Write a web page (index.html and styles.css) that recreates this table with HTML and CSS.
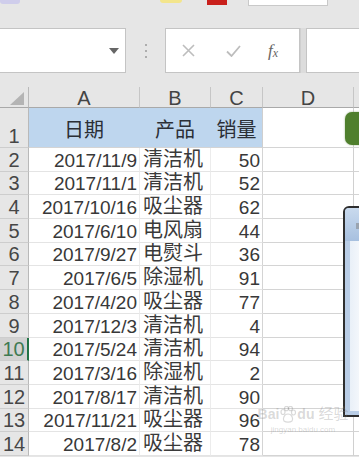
FILE: index.html
```html
<!DOCTYPE html>
<html lang="zh-CN">
<head>
<meta charset="utf-8">
<title>Sheet</title>
<link rel="stylesheet" href="styles.css">
</head>
<body>
<div class="app">
  <div class="ribbon">
    <span class="rb-purple"></span>
    <span class="rb-yellow"></span>
    <span class="rb-red"></span>
    <span class="rb-box"></span>
  </div>

  <div class="fbar">
    <div class="namebox">
      <svg class="dd" width="10" height="6" viewBox="0 0 10 6"><path d="M0 0 L10 0 L5 6 Z" fill="#666"/></svg>
    </div>
    <div class="dots"><i></i><i></i><i></i></div>
    <div class="fbtns">
      <svg class="ico-x" width="13" height="13" viewBox="0 0 13 13"><path d="M1 1 L12 12 M12 1 L1 12" stroke="#bdbdbd" stroke-width="1.6" fill="none"/></svg>
      <svg class="ico-ok" width="15" height="12" viewBox="0 0 15 12"><path d="M1 6.5 L5.5 11 L14 1" stroke="#bdbdbd" stroke-width="1.8" fill="none"/></svg>
      <span class="fx">f<span class="fx-x">x</span></span>
    </div>
    <div class="split"></div>
    <div class="finput"></div>
  </div>

  <div class="sheet">
    <div class="c corner"><svg width="14" height="13" viewBox="0 0 14 13"><path d="M14 0 L14 13 L0 13 Z" fill="#b4b4b4"/></svg></div>
    <div class="c ch">A</div>
    <div class="c ch">B</div>
    <div class="c ch">C</div>
    <div class="c ch">D</div>
    <div class="c ch e"></div>

    <div class="c rh">1</div>
    <div class="c hd">日期</div>
    <div class="c hd">产品</div>
    <div class="c hd last">销量</div>
    <div class="c d"></div>
    <div class="c e"></div>

    <div class="c rh">2</div><div class="c a">2017/11/9</div><div class="c b">清洁机</div><div class="c n">50</div><div class="c d"></div><div class="c e"></div>
    <div class="c rh">3</div><div class="c a">2017/11/1</div><div class="c b">清洁机</div><div class="c n">52</div><div class="c d"></div><div class="c e"></div>
    <div class="c rh">4</div><div class="c a">2017/10/16</div><div class="c b">吸尘器</div><div class="c n">62</div><div class="c d"></div><div class="c e"></div>
    <div class="c rh">5</div><div class="c a">2017/6/10</div><div class="c b">电风扇</div><div class="c n">44</div><div class="c d"></div><div class="c e"></div>
    <div class="c rh">6</div><div class="c a">2017/9/27</div><div class="c b">电熨斗</div><div class="c n">36</div><div class="c d"></div><div class="c e"></div>
    <div class="c rh">7</div><div class="c a">2017/6/5</div><div class="c b">除湿机</div><div class="c n">91</div><div class="c d"></div><div class="c e"></div>
    <div class="c rh">8</div><div class="c a">2017/4/20</div><div class="c b">吸尘器</div><div class="c n">77</div><div class="c d"></div><div class="c e"></div>
    <div class="c rh">9</div><div class="c a">2017/12/3</div><div class="c b">清洁机</div><div class="c n">4</div><div class="c d"></div><div class="c e"></div>
    <div class="c rh sel">10</div><div class="c a">2017/5/24</div><div class="c b">清洁机</div><div class="c n">94</div><div class="c d"></div><div class="c e"></div>
    <div class="c rh">11</div><div class="c a">2017/3/16</div><div class="c b">除湿机</div><div class="c n">2</div><div class="c d"></div><div class="c e"></div>
    <div class="c rh">12</div><div class="c a">2017/8/17</div><div class="c b">清洁机</div><div class="c n">90</div><div class="c d"></div><div class="c e"></div>
    <div class="c rh">13</div><div class="c a">2017/11/21</div><div class="c b">吸尘器</div><div class="c n">96</div><div class="c d"></div><div class="c e"></div>
    <div class="c rh">14</div><div class="c a">2017/8/2</div><div class="c b">吸尘器</div><div class="c n">78</div><div class="c d"></div><div class="c e"></div>
  </div>

  <div class="green-btn"></div>

  <div class="dialog">
    <div class="dlg-title"><span class="dlg-ico"></span></div>
    <div class="dlg-body"></div>
  </div>

  <div class="watermark">
    <div class="wm-main">
      <span>Bai</span>
      <svg class="wm-paw" width="16" height="17" viewBox="0 0 16 17"><g fill="none" stroke="currentColor" stroke-width="1.2"><ellipse cx="3" cy="6" rx="2" ry="2.5"/><ellipse cx="6.5" cy="2.5" rx="2" ry="2.2"/><ellipse cx="10.5" cy="2.5" rx="2" ry="2.2"/><ellipse cx="13.5" cy="6.5" rx="2" ry="2.5"/><path d="M8 8 C4 8 2.5 13 4 15 C6 16.5 10 16.5 12 15 C13.5 13 12 8 8 8 Z"/></g></svg>
      <span>du</span>
      <span class="wm-cn">经验</span>
    </div>
    <span class="wm-sub">jingyan.baidu.com</span>
  </div>
</div>
</body>
</html>
```

FILE: styles.css
```css
html, body {
  margin: 0;
  padding: 0;
}
body {
  width: 359px;
  height: 457px;
  overflow: hidden;
  background: #e6e6e6;
  font-family: "Liberation Sans", "Noto Sans CJK SC", sans-serif;
  color: #333;
}
.app {
  position: relative;
  width: 359px;
  height: 457px;
  overflow: hidden;
  background: #e6e6e6;
}

/* ribbon remnants at top */
.ribbon {
  height: 8px;
  display: flex;
  align-items: flex-start;
}
.ribbon span { display: block; }
.rb-purple {
  width: 20px; height: 4px;
  background: #cfcdeb;
  border-radius: 0 0 3px 3px;
}
.rb-yellow {
  width: 22px; height: 3px;
  margin-left: 140px;
  background: #f3e58c;
  border-radius: 0 0 6px 6px;
}
.rb-red {
  width: 20px; height: 5px;
  margin-left: 25px;
  background: #c9201c;
}
.rb-box {
  width: 78px; height: 5px;
  margin-left: 21px;
  background: #fff;
  border: 1px solid #c9c9c9;
  border-top: none;
}

/* formula bar */
.fbar {
  margin-top: 20px;
  height: 45px;
  display: flex;
}
.namebox {
  width: 126px;
  box-sizing: border-box;
  background: #fff;
  border: 1px solid #c4c4c4;
  border-left: none;
  display: flex;
  align-items: center;
  justify-content: flex-end;
  padding-right: 6px;
}
.dd { margin-top: 1px; }
.dots {
  width: 39px;
  display: flex;
  flex-direction: column;
  align-items: center;
  justify-content: center;
  gap: 4px;
}
.dots i {
  display: block;
  width: 2px; height: 2px;
  background: #9a9a9a;
  border-radius: 1px;
}
.fbtns {
  width: 135px;
  box-sizing: border-box;
  background: #fff;
  border: 1px solid #c4c4c4;
  display: flex;
  align-items: center;
  padding-left: 16px;
}
.ico-ok { margin-left: 31px; }
.fx {
  margin-left: 27px;
  font-family: "Liberation Serif", serif;
  font-style: italic;
  font-size: 17px;
  color: #666;
  line-height: 1;
}
.fx-x {
  font-size: 12px;
  position: relative;
  top: 1px;
}
.split {
  width: 6px;
  background: #dcdcdc;
  border-left: 1px solid #cfcfcf;
  box-sizing: border-box;
}
.finput {
  flex: 1;
  background: #fff;
  border: 1px solid #c4c4c4;
  border-right: none;
}

/* sheet grid */
.sheet {
  margin-top: 14px;
  display: grid;
  grid-template-columns: 29px 111px 71px 52px 91px 5px;
  grid-template-rows: 21px 40px repeat(13, 23.7px);
  background: #fff;
}
.c {
  box-sizing: border-box;
  overflow: hidden;
  white-space: nowrap;
  display: flex;
  align-items: flex-end;
  line-height: 21px;
  font-size: 19px;
  border-right: 1px solid #ececec;
  border-bottom: 1px solid #e4e4e4;
}
.corner {
  background: #e6e6e6;
  border-right: 1px solid #b9b9b9;
  border-bottom: 1px solid #a9a9a9;
  justify-content: flex-end;
  align-items: flex-end;
  padding: 0 4px 2px 0;
}
.corner svg { display: block; }
.ch {
  background: #e6e6e6;
  border-right: 1px solid #c6c6c6;
  border-bottom: 1px solid #a9a9a9;
  justify-content: center;
  align-items: flex-start;
  padding-top: 1px;
  font-size: 20px;
  color: #444;
}
.rh {
  background: #e6e6e6;
  border-right: 1px solid #b9b9b9;
  border-bottom: 1px solid #cdcdcd;
  justify-content: center;
  font-size: 20px;
  color: #464646;
}
.rh.sel {
  background: #d2d2d2;
  color: #3f7a52;
  border-right: 2px solid #217346;
}
.hd {
  background: #bed6ee;
  border-right: 1px solid #bed6ee;
  border-bottom: 1px solid #d4d4d4;
  justify-content: center;
  padding-bottom: 6px;
  font-size: 20px;
  color: #2b2f36;
}
.hd.last { border-right-color: #cfcfcf; }
.a {
  justify-content: flex-end;
  padding-right: 2px;
  color: #383838;
}
.b {
  padding-left: 3px;
  padding-bottom: 1px;
  font-size: 20px;
  color: #3a3a3a;
}
.n {
  justify-content: flex-end;
  padding-right: 2px;
  border-right: 1px solid #d4d4d4;
  color: #383838;
}
.d {
  border-right: 1px solid #d0d0d0;
  border-bottom: 1px solid #d4d4d4;
}
.e {
  border-right: none;
  border-bottom: 1px solid #d4d4d4;
}
.ch.e { border-bottom: 1px solid #a9a9a9; }

/* overlays */
.green-btn {
  position: absolute;
  left: 345px;
  top: 112px;
  width: 24px;
  height: 33px;
  border-radius: 7px;
  background: #4f7f2d;
  box-shadow: 0 0 2px rgba(80, 120, 50, 0.6);
}
.dialog {
  position: absolute;
  left: 343px;
  top: 206px;
  width: 30px;
  height: 211px;
  box-sizing: border-box;
  border: 2px solid #2e2e2e;
  border-radius: 6px 0 0 0;
  background: #b9cde6;
  display: flex;
  flex-direction: column;
  overflow: hidden;
}
.dlg-title {
  height: 33px;
  background: linear-gradient(#c9daee, #a7c0df);
  position: relative;
}
.dlg-ico {
  position: absolute;
  left: 11px;
  top: 15px;
  width: 4px;
  height: 6px;
  background: #9aa4b0;
}
.dlg-body {
  flex: 1;
  margin: 0 0 4px 5px;
  background: linear-gradient(90deg, #e9f0f8, #f7f9fc 60%);
}
.watermark {
  position: absolute;
  left: 265px;
  top: 404px;
  width: 76px;
  display: flex;
  flex-direction: column;
  align-items: center;
  color: rgba(130, 130, 130, 0.3);
  white-space: nowrap;
  pointer-events: none;
}
.wm-main {
  display: flex;
  align-items: center;
  gap: 1px;
  font-size: 14px;
  font-weight: bold;
  line-height: 20px;
}
.wm-cn {
  margin-left: 3px;
  font-size: 15px;
  font-weight: normal;
}
.wm-sub {
  font-size: 8px;
  line-height: 12px;
}
```
